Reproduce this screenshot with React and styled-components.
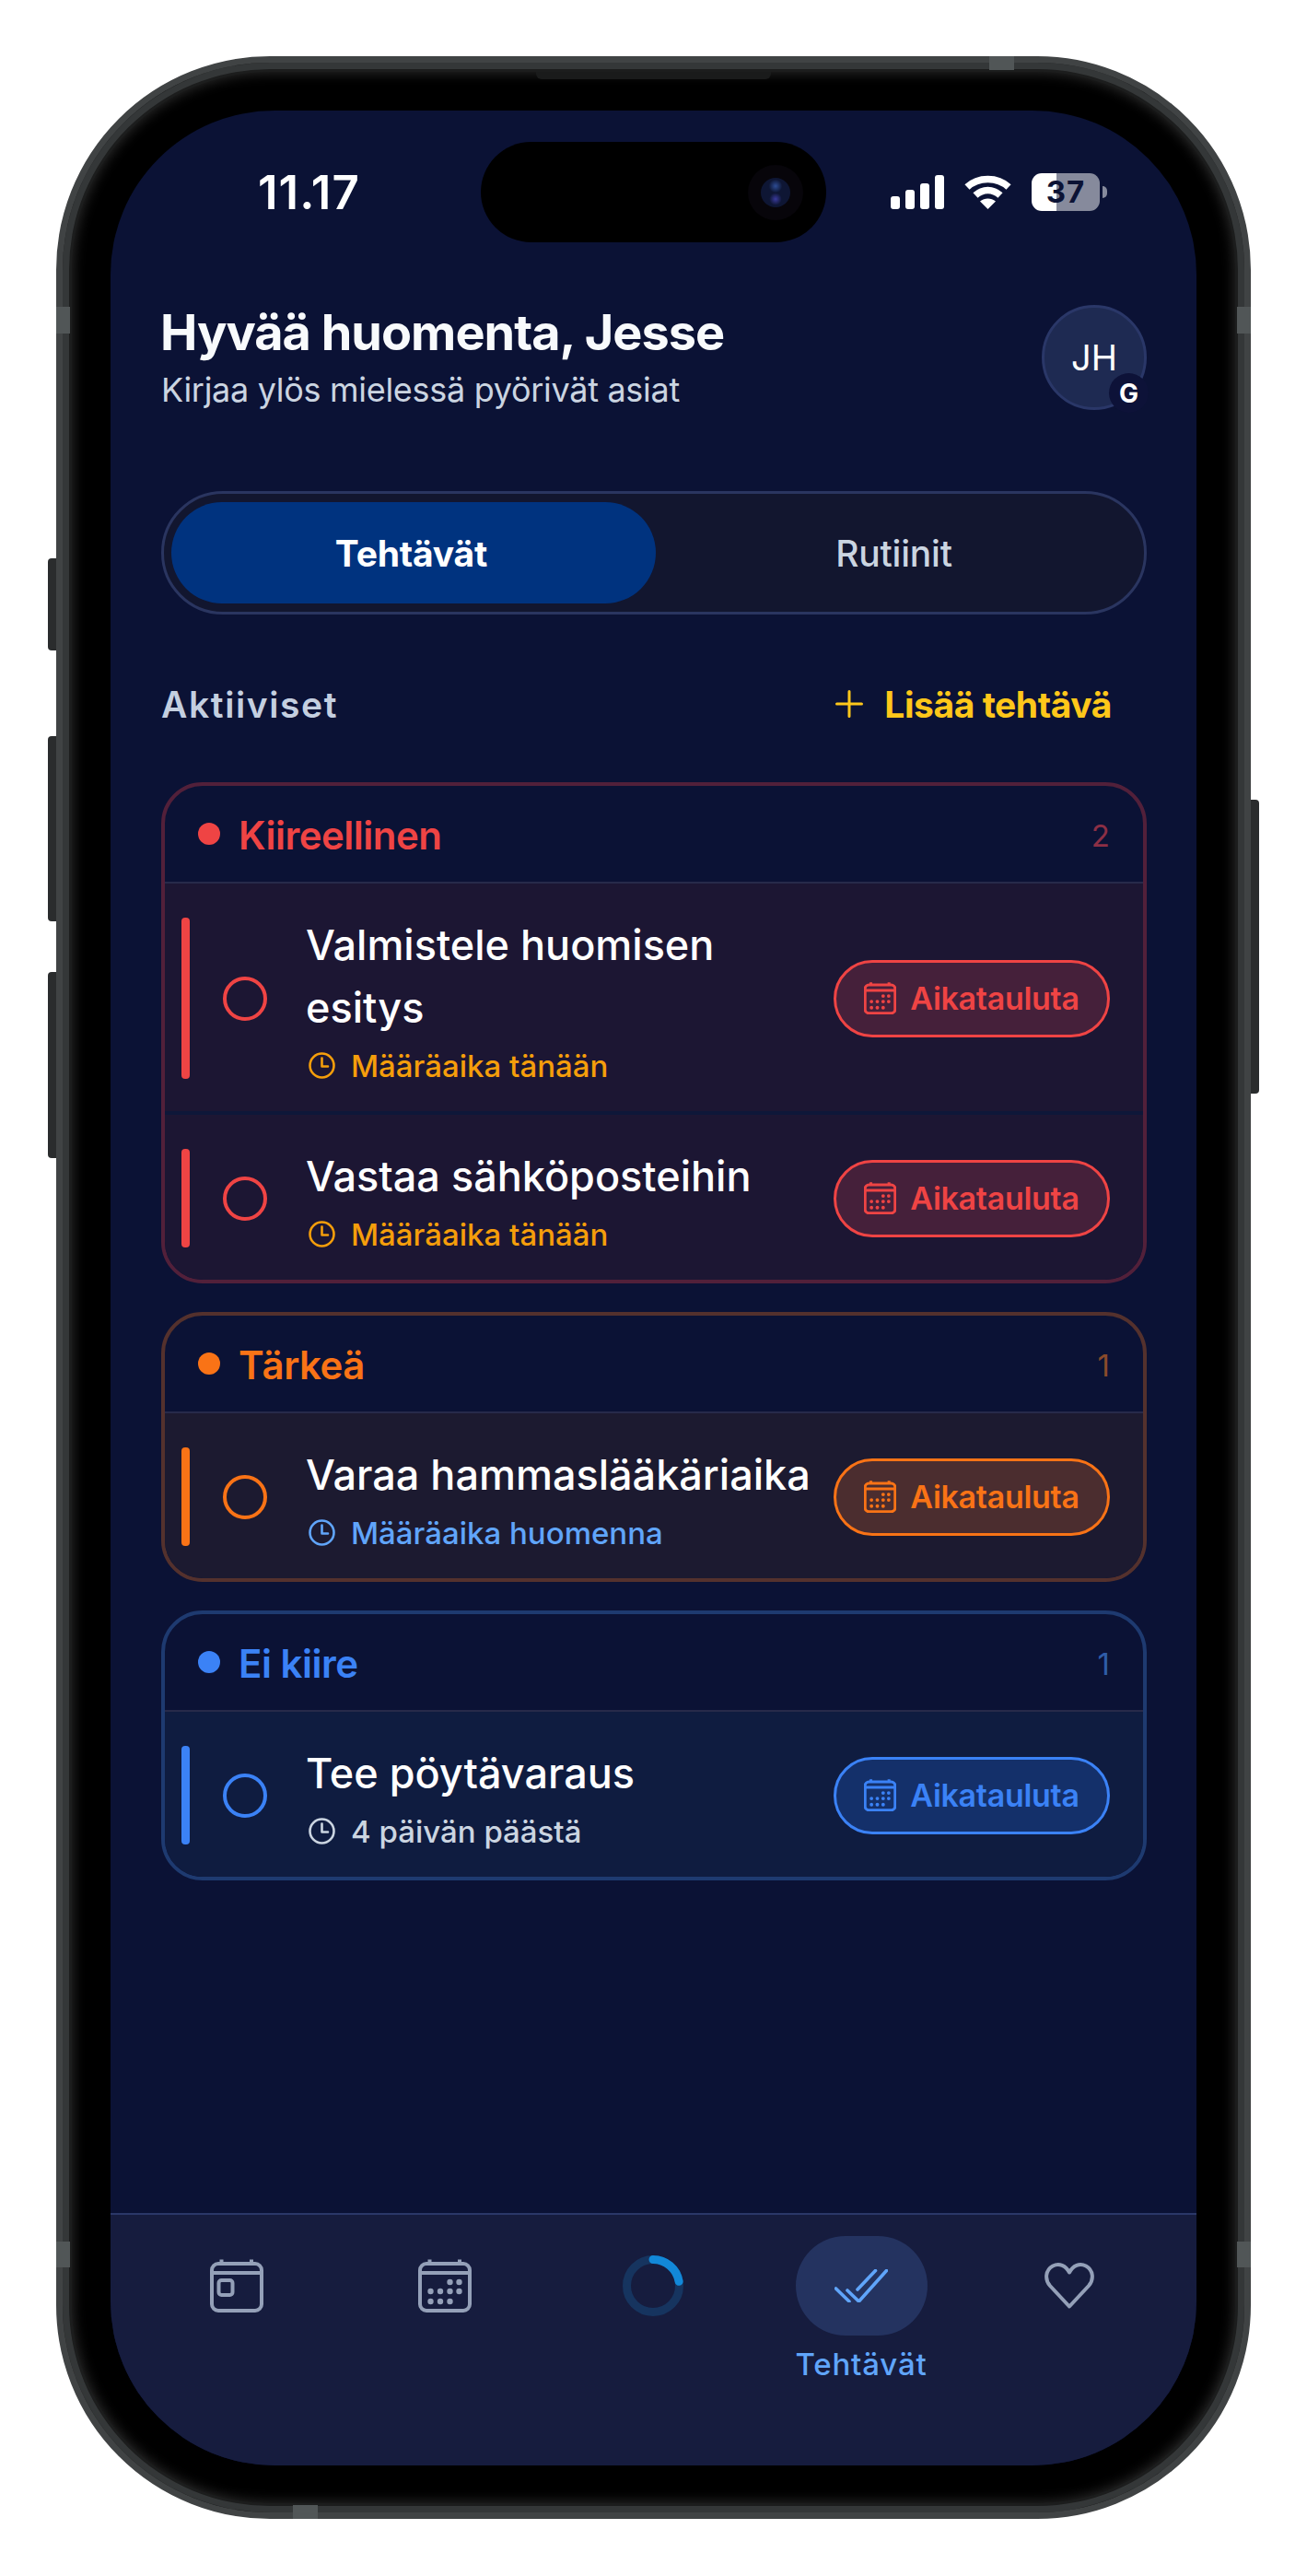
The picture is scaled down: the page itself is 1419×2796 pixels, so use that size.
import React from "react";
import styled, { createGlobalStyle } from "styled-components";

const GlobalStyle = createGlobalStyle`
  html, body {
    margin: 0;
    padding: 0;
    background: #fff;
  }
  body {
    font-family: Inter, "Liberation Sans", sans-serif;
  }
`;

const tones = {
  red: { accent: "#ef4444", border: "#52203a", row: "#1c1633", button: "#45203a", count: "#8c2f45" },
  orange: { accent: "#f97316", border: "#54312d", row: "#1c1a30", button: "#4b2d2f", count: "#8a4a2a" },
  blue: { accent: "#3b82f6", border: "#1e3a70", row: "#0f1c40", button: "#14306a", count: "#2f5ca8" }
};

const Page = styled.div`
  width: 1419px;
  height: 2796px;
  padding: 61px 0 0 61px;
  box-sizing: border-box;
  overflow: hidden;
`;

const Phone = styled.div`
  position: relative;
  width: 1297px;
  height: 2673px;
  box-sizing: border-box;
  padding: 52px;
  background: #000;
  border: 7px solid #404344;
  border-radius: 232px;
  box-shadow:
    inset 0 0 0 7px #343738,
    inset 0 0 0 10px #1c1d1d,
    inset 0 0 14px 11px #2c2c2c;
`;

const SideButton = styled.div`
  position: absolute;
  top: ${props => props.$top}px;
  height: ${props => props.$height}px;
  width: 9px;
  background: #2a2c2d;
  ${props => (props.$right ? "right: -16px; border-radius: 0 4px 4px 0;" : "left: -16px; border-radius: 4px 0 0 4px;")}
`;

const Band = styled.div`
  position: absolute;
  background: #515657;
  ${props => props.$css}
`;

const Earpiece = styled.div`
  position: absolute;
  top: 10px;
  left: 514px;
  width: 255px;
  height: 8px;
  background: #1a1b1b;
  border-radius: 0 0 6px 6px;
`;

const Screen = styled.div`
  position: relative;
  display: flex;
  flex-direction: column;
  height: 2556px;
  background: #0b1235;
  border-radius: 178px;
  overflow: hidden;
  color: #fff;
`;

const Island = styled.div`
  position: absolute;
  top: 34px;
  left: 402px;
  width: 375px;
  height: 109px;
  border-radius: 55px;
  background: #000;
`;

const Camera = styled.div`
  position: absolute;
  top: 25px;
  left: 290px;
  width: 60px;
  height: 60px;
  border-radius: 50%;
  background: #07050a;
  display: flex;
  align-items: center;
  justify-content: center;
`;

const Lens = styled.div`
  width: 32px;
  height: 32px;
  border-radius: 50%;
  background:
    radial-gradient(circle at 50% 28%, #2d4c94 0, transparent 26%),
    radial-gradient(circle at 50% 72%, #3a3a9c 0, transparent 24%),
    #0e1634;
`;

const StatusBar = styled.div`
  display: flex;
  align-items: center;
  justify-content: space-between;
  height: 176px;
  padding: 0 97px 0 160px;
  flex-shrink: 0;
`;

const Time = styled.div`
  font-size: 51px;
  font-weight: 600;
  letter-spacing: 1px;
`;

const StatusIcons = styled.div`
  display: flex;
  align-items: center;
  gap: 22px;
`;

const Battery = styled.div`
  display: flex;
  align-items: center;
  gap: 3px;
`;

const BatteryBody = styled.div`
  width: 74px;
  height: 41px;
  border-radius: 11px;
  background: linear-gradient(90deg, #fff 37%, #868a9c 37%);
  color: #0c1335;
  font-size: 33px;
  font-weight: 700;
  line-height: 41px;
  letter-spacing: 1px;
  text-align: center;
`;

const BatteryNub = styled.div`
  width: 5px;
  height: 13px;
  background: #868a9c;
  border-radius: 0 6px 6px 0;
`;

const Content = styled.div`
  display: flex;
  flex-direction: column;
  padding: 35px 54px 0 55px;
`;

const Header = styled.div`
  display: flex;
  justify-content: space-between;
  align-items: flex-start;
`;

const Title = styled.h1`
  margin: 0 0 0 -1px;
  font-size: 54px;
  font-weight: 700;
  line-height: 59px;
  color: #f8fafc;
  letter-spacing: -1px;
`;

const Subtitle = styled.p`
  margin: 12px 0 0;
  font-size: 36px;
  line-height: 43px;
  color: #cbd5e1;
  letter-spacing: -0.3px;
`;

const Avatar = styled.div`
  position: relative;
  width: 114px;
  height: 114px;
  box-sizing: border-box;
  border-radius: 50%;
  border: 3px solid #2a3768;
  background: #1e2a52;
  display: flex;
  align-items: center;
  justify-content: center;
  font-size: 38px;
  font-weight: 400;
`;

const AvatarBadge = styled.div`
  position: absolute;
  right: -5px;
  bottom: -6px;
  width: 43px;
  height: 43px;
  border-radius: 50%;
  background: #0d1238;
  display: flex;
  align-items: center;
  justify-content: center;
  font-size: 28px;
  font-weight: 700;
`;

const Segmented = styled.div`
  display: grid;
  grid-template-columns: 526px 1fr;
  height: 134px;
  margin-top: 88px;
  box-sizing: border-box;
  padding: 9px 8px;
  border: 3px solid #2a3560;
  border-radius: 67px;
  background: #12162f;
`;

const Segment = styled.div`
  display: flex;
  align-items: center;
  justify-content: center;
  padding-right: 5px;
  border-radius: 55px;
  font-size: 39px;
  font-weight: ${props => (props.$active ? 700 : 500)};
  letter-spacing: -0.2px;
  color: ${props => (props.$active ? "#fff" : "#cbd5e1")};
  background: ${props => (props.$active ? "#00337f" : "transparent")};
`;

const SectionRow = styled.div`
  display: flex;
  align-items: center;
  justify-content: space-between;
  height: 60px;
  margin: 67px 0 55px;
  padding-right: 38px;
`;

const SectionTitle = styled.div`
  font-size: 39px;
  font-weight: 600;
  color: #c4cfe0;
  letter-spacing: 1.6px;
`;

const AddButton = styled.div`
  display: flex;
  align-items: center;
  gap: 23px;
  font-size: 39px;
  font-weight: 700;
  letter-spacing: -0.45px;
  color: #ffc71a;
`;

const Groups = styled.div`
  display: flex;
  flex-direction: column;
  gap: 31px;
`;

const Group = styled.div`
  border: 4px solid ${props => tones[props.$tone].border};
  border-radius: 45px;
  overflow: hidden;
`;

const GroupHeader = styled.div`
  display: flex;
  align-items: center;
  height: 104px;
  padding: 0 36px;
  border-bottom: 2px solid #272a4a;
`;

const Dot = styled.div`
  width: 24px;
  height: 24px;
  border-radius: 50%;
  background: ${props => tones[props.$tone].accent};
`;

const GroupName = styled.div`
  margin: 3px 0 0 20px;
  font-size: 42px;
  font-weight: 600;
  letter-spacing: -0.5px;
  color: ${props => tones[props.$tone].accent};
`;

const GroupCount = styled.div`
  margin: 3px 0 0 auto;
  font-size: 33px;
  color: ${props => tones[props.$tone].count};
`;

const TaskRow = styled.div`
  display: flex;
  align-items: center;
  padding: 37px 36px 35px 18px;
  background: ${props => tones[props.$tone].row};
  & + & {
    border-top: 4px solid #0e1739;
  }
`;

const AccentBar = styled.div`
  align-self: stretch;
  width: 9px;
  border-radius: 4px;
  background: ${props => tones[props.$tone].accent};
`;

const Check = styled.div`
  width: 48px;
  height: 48px;
  box-sizing: border-box;
  margin: 0 42px 0 36px;
  border-radius: 50%;
  border: 4px solid ${props => tones[props.$tone].accent};
  flex-shrink: 0;
`;

const TaskBody = styled.div`
  flex: 1;
  min-width: 0;
`;

const TaskTitle = styled.div`
  margin-top: -4px;
  font-size: 45px;
  font-weight: 500;
  line-height: 68px;
  color: #fff;
`;

const Due = styled.div`
  display: flex;
  align-items: center;
  gap: 17px;
  height: 29px;
  margin-top: 14px;
  padding-left: 3px;
  font-size: 33px;
  font-weight: 500;
  color: ${props => props.$color};
`;

const ScheduleButton = styled.div`
  display: flex;
  align-items: center;
  justify-content: center;
  gap: 15px;
  width: 300px;
  height: 84px;
  box-sizing: border-box;
  flex-shrink: 0;
  border: 3px solid ${props => tones[props.$tone].accent};
  border-radius: 42px;
  background: ${props => tones[props.$tone].button};
  color: ${props => tones[props.$tone].accent};
  font-size: 34px;
  font-weight: 600;
  letter-spacing: -0.3px;
`;

const Nav = styled.div`
  display: grid;
  grid-template-columns: repeat(5, 226px);
  margin-top: auto;
  height: 274px;
  box-sizing: border-box;
  padding: 23px 24px 0;
  background: #161c3e;
  border-top: 2px solid #2a3768;
`;

const NavItem = styled.div`
  display: flex;
  flex-direction: column;
  align-items: center;
`;

const NavIcon = styled.div`
  display: flex;
  align-items: center;
  justify-content: center;
  width: 143px;
  height: 108px;
  border-radius: 54px;
  background: ${props => (props.$active ? "#243360" : "transparent")};
  color: ${props => (props.$active ? "#60a5fa" : "#94a0b8")};
`;

const NavLabel = styled.div`
  margin-top: 9px;
  font-size: 33px;
  font-weight: 500;
  line-height: 44px;
  color: #60a5fa;
  letter-spacing: 0.8px;
`;

const SignalIcon = () => (
  <svg width="58" height="37" viewBox="0 0 58 37" fill="#fff">
    <rect x="0" y="23" width="10" height="14" rx="3" />
    <rect x="16" y="16" width="10" height="21" rx="3" />
    <rect x="32" y="9" width="10" height="28" rx="3" />
    <rect x="48" y="0" width="10" height="37" rx="3" />
  </svg>
);

const WifiIcon = () => (
  <svg width="51" height="37" viewBox="0 0 51 37" fill="none" stroke="#fff" strokeWidth="7.5">
    <path d="M3 13 C15 1.5 36 1.5 48 13" />
    <path d="M12 22 C20 14.5 31 14.5 39 22" />
    <path d="M25.5 37 L17 28.5 C22 24.5 29 24.5 34 28.5 Z" fill="#fff" stroke="none" />
  </svg>
);

const PlusIcon = () => (
  <svg width="30" height="30" viewBox="0 0 30 30" stroke="#ffc71a" strokeWidth="3" strokeLinecap="round">
    <path d="M15 1.5 V28.5 M1.5 15 H28.5" />
  </svg>
);

const ClockIcon = () => (
  <svg width="29" height="29" viewBox="0 0 29 29" fill="none" stroke="currentColor" strokeWidth="2.6" strokeLinecap="round" strokeLinejoin="round">
    <circle cx="14.5" cy="14.5" r="13" />
    <path d="M14.5 6.5 V15.5 H21" />
  </svg>
);

const calendarDots = [
  [34.5, 25], [44.5, 25],
  [13.5, 35], [24, 35], [34.5, 35], [44.5, 35],
  [13.5, 46], [24, 46], [34.5, 46]
];

const CalendarFrame = ({ size, stroke, children }) => (
  <svg width={size} height={size} viewBox="0 0 58 58" fill="none" stroke="currentColor" strokeWidth={stroke}>
    <rect x="2" y="5" width="54" height="51" rx="7" />
    <path d="M2 15 H56 M12.5 0.5 V5 M45 0.5 V5" />
    {children}
  </svg>
);

const CalendarGrid = ({ size = 58, stroke = 4 }) => (
  <CalendarFrame size={size} stroke={stroke}>
    {calendarDots.map(([x, y]) => (
      <circle key={`${x}-${y}`} cx={x} cy={y} r="3.2" fill="currentColor" stroke="none" />
    ))}
  </CalendarFrame>
);

const CalendarDay = () => (
  <CalendarFrame size={58} stroke={4}>
    <rect x="9.5" y="23" width="15" height="16" rx="3" />
  </CalendarFrame>
);

const ProgressRing = () => (
  <svg width="66" height="66" viewBox="0 0 66 66" fill="none" strokeWidth="9">
    <circle cx="33" cy="33" r="28.5" stroke="#16345f" />
    <circle
      cx="33"
      cy="33"
      r="28.5"
      stroke="#1288d8"
      strokeLinecap="round"
      strokeDasharray="40 179"
      transform="rotate(-90 33 33)"
    />
  </svg>
);

const DoubleCheck = () => (
  <svg width="58" height="36" viewBox="0 0 58 36" fill="none" stroke="currentColor" strokeWidth="3.6" strokeLinecap="round" strokeLinejoin="round">
    <path d="M1.5 21 L16 35" />
    <path d="M14 23 L26.5 35 L56.5 1.5" />
    <path d="M25 22 L44.5 1.5" />
  </svg>
);

const HeartIcon = () => (
  <svg width="54" height="50" viewBox="0 0 54 50" fill="none" stroke="currentColor" strokeWidth="4" strokeLinejoin="round">
    <path d="M27 47.5 L6 25 C0 18 1 8 9 3.5 C16 0 23 3 27 10.5 C31 3 38 0 45 3.5 C53 8 54 18 48 25 Z" />
  </svg>
);

const groups = [
  {
    tone: "red",
    name: "Kiireellinen",
    tasks: [
      { title: "Valmistele huomisen esitys", due: "Määräaika tänään", color: "#f59e0b" },
      { title: "Vastaa sähköposteihin", due: "Määräaika tänään", color: "#f59e0b" }
    ]
  },
  {
    tone: "orange",
    name: "Tärkeä",
    tasks: [{ title: "Varaa hammaslääkäriaika", due: "Määräaika huomenna", color: "#60a5fa" }]
  },
  {
    tone: "blue",
    name: "Ei kiire",
    tasks: [{ title: "Tee pöytävaraus", due: "4 päivän päästä", color: "#cbd5e1" }]
  }
];

const App = () => (
  <Page>
    <GlobalStyle />
    <Phone>
      <SideButton $top={538} $height={100} />
      <SideButton $top={731} $height={201} />
      <SideButton $top={987} $height={202} />
      <SideButton $right $top={800} $height={319} />
      <Band $css="top: 265px; left: -7px; width: 15px; height: 29px;" />
      <Band $css="top: 265px; right: -7px; width: 15px; height: 29px;" />
      <Band $css="top: 2365px; left: -7px; width: 15px; height: 28px;" />
      <Band $css="top: 2365px; right: -7px; width: 15px; height: 28px;" />
      <Band $css="top: -7px; left: 1006px; width: 27px; height: 15px;" />
      <Band $css="bottom: -7px; left: 250px; width: 27px; height: 15px;" />
      <Earpiece />
      <Screen>
        <Island>
          <Camera>
            <Lens />
          </Camera>
        </Island>
        <StatusBar>
          <Time>11.17</Time>
          <StatusIcons>
            <SignalIcon />
            <WifiIcon />
            <Battery>
              <BatteryBody>37</BatteryBody>
              <BatteryNub />
            </Battery>
          </StatusIcons>
        </StatusBar>
        <Content>
          <Header>
            <div>
              <Title>Hyvää huomenta, Jesse</Title>
              <Subtitle>Kirjaa ylös mielessä pyörivät asiat</Subtitle>
            </div>
            <Avatar>
              JH
              <AvatarBadge>G</AvatarBadge>
            </Avatar>
          </Header>
          <Segmented>
            <Segment $active>Tehtävät</Segment>
            <Segment>Rutiinit</Segment>
          </Segmented>
          <SectionRow>
            <SectionTitle>Aktiiviset</SectionTitle>
            <AddButton>
              <PlusIcon />
              Lisää tehtävä
            </AddButton>
          </SectionRow>
          <Groups>
            {groups.map(group => (
              <Group key={group.name} $tone={group.tone}>
                <GroupHeader>
                  <Dot $tone={group.tone} />
                  <GroupName $tone={group.tone}>{group.name}</GroupName>
                  <GroupCount $tone={group.tone}>{group.tasks.length}</GroupCount>
                </GroupHeader>
                {group.tasks.map(task => (
                  <TaskRow key={task.title} $tone={group.tone}>
                    <AccentBar $tone={group.tone} />
                    <Check $tone={group.tone} />
                    <TaskBody>
                      <TaskTitle>{task.title}</TaskTitle>
                      <Due $color={task.color}>
                        <ClockIcon />
                        {task.due}
                      </Due>
                    </TaskBody>
                    <ScheduleButton $tone={group.tone}>
                      <CalendarGrid size={35} stroke={5} />
                      Aikatauluta
                    </ScheduleButton>
                  </TaskRow>
                ))}
              </Group>
            ))}
          </Groups>
        </Content>
        <Nav>
          <NavItem>
            <NavIcon>
              <CalendarDay />
            </NavIcon>
          </NavItem>
          <NavItem>
            <NavIcon>
              <CalendarGrid />
            </NavIcon>
          </NavItem>
          <NavItem>
            <NavIcon>
              <ProgressRing />
            </NavIcon>
          </NavItem>
          <NavItem>
            <NavIcon $active>
              <DoubleCheck />
            </NavIcon>
            <NavLabel>Tehtävät</NavLabel>
          </NavItem>
          <NavItem>
            <NavIcon>
              <HeartIcon />
            </NavIcon>
          </NavItem>
        </Nav>
      </Screen>
    </Phone>
  </Page>
);

export default App;
